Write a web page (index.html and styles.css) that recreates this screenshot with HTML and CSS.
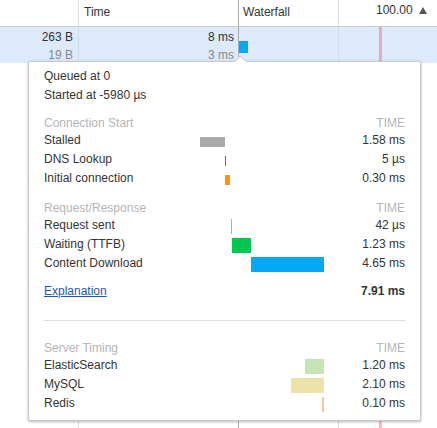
FILE: index.html
```html
<!DOCTYPE html>
<html>
<head>
<meta charset="utf-8">
<link rel="stylesheet" href="styles.css">
</head>
<body>
<div class="table">
  <div class="hcell col1"></div>
  <div class="hcell col2">Time</div>
  <div class="hcell col3">Waterfall</div>
  <div class="hcell col4">100.00 <svg class="sort" width="8" height="7" viewBox="0 0 8 7"><path d="M4 0 L8 7 L0 7 Z" fill="#555"/></svg></div>

  <div class="rcell col1 num"><div>263 B</div><div class="sub">19 B</div></div>
  <div class="rcell col2 num"><div>8 ms</div><div class="sub">3 ms</div></div>
  <div class="rcell col3 wf"><span class="wbar" style="left:0;width:9px"></span></div>
  <div class="rcell col4"></div>

  <div class="fcell col1"></div>
  <div class="fcell col2"></div>
  <div class="fcell col3"></div>
  <div class="fcell col4"></div>
</div>

<div class="event-line dcl" style="left:381px"></div>
<div class="event-line load" style="left:379px"></div>

<div class="popover">
  <span class="arrow"></span>
  <div class="lines">
    <div class="line">Queued at 0</div>
    <div class="line">Started at -5980 µs</div>
  </div>

  <div class="row head"><span>Connection Start</span><span></span><span class="t">TIME</span></div>
  <div class="row"><span>Stalled</span><span class="bars"><i class="bar short stalled" style="left:0;width:25px"></i></span><span class="t">1.58 ms</span></div>
  <div class="row"><span>DNS Lookup</span><span class="bars"><i class="bar short dns" style="left:25px;width:1px"></i></span><span class="t">5 µs</span></div>
  <div class="row"><span>Initial connection</span><span class="bars"><i class="bar short connecting" style="left:25px;width:5px"></i></span><span class="t">0.30 ms</span></div>

  <div class="row head"><span>Request/Response</span><span></span><span class="t">TIME</span></div>
  <div class="row"><span>Request sent</span><span class="bars"><i class="bar sending" style="left:31px;width:1px"></i></span><span class="t">42 µs</span></div>
  <div class="row"><span>Waiting (TTFB)</span><span class="bars"><i class="bar waiting" style="left:32px;width:19px"></i></span><span class="t">1.23 ms</span></div>
  <div class="row"><span>Content Download</span><span class="bars"><i class="bar receiving" style="left:51px;width:73px"></i></span><span class="t">4.65 ms</span></div>

  <div class="row total"><span><a href="#" class="link">Explanation</a></span><span></span><span class="t"><b>7.91 ms</b></span></div>

  <div class="separator"></div>

  <div class="row head"><span>Server Timing</span><span></span><span class="t">TIME</span></div>
  <div class="row"><span>ElasticSearch</span><span class="bars"><i class="bar srv elastic" style="left:105px;width:19px"></i></span><span class="t">1.20 ms</span></div>
  <div class="row"><span>MySQL</span><span class="bars"><i class="bar srv mysql" style="left:91px;width:33px"></i></span><span class="t">2.10 ms</span></div>
  <div class="row"><span>Redis</span><span class="bars"><i class="bar srv redis" style="left:122px;width:2px"></i></span><span class="t">0.10 ms</span></div>
</div>
</body>
</html>
```
FILE: styles.css
```css
html, body {
  margin: 0;
  padding: 0;
  height: 100%;
  background: #fff;
}
body {
  font-family: "Liberation Sans", Arial, sans-serif;
  font-size: 12px;
  color: #333;
  position: relative;
  overflow: hidden;
}
.table {
  display: grid;
  grid-template-columns: 79px 160px 100px 1fr;
  grid-template-rows: 27px 36px 1fr;
  height: 100vh;
}
.hcell {
  border-bottom: 1px solid #ccc;
  border-right: 1px solid #ddd;
  line-height: 20px;
  padding: 2px 5px 0;
  white-space: nowrap;
}
.hcell.col2 { border-right-color: #aaa; }
.hcell.col3 { padding-left: 4px; }
.hcell.col4 {
  border-right: none;
  text-align: right;
  padding-top: 0;
  padding-right: 10px;
}
.sort { margin-left: 3px; vertical-align: 0; }
.rcell {
  background: #dceafc;
  border-right: 1px solid #cfdcec;
  line-height: 18px;
  padding: 1px 5px 0;
}
.rcell.col2 { border-right-color: #aaa; padding-right: 4px; }
.rcell.col4 { border-right: none; }
.num { text-align: right; }
.sub { color: #888; }
.wf { position: relative; padding: 0; }
.wbar {
  position: absolute;
  top: 14px;
  height: 12px;
  background: #03a9f4;
}
.fcell { border-right: 1px solid #ddd; }
.fcell.col2 { border-right-color: #aaa; }
.fcell.col4 { border-right: none; }

.event-line {
  position: absolute;
  top: 27px;
  bottom: 0;
  width: 2px;
}
.event-line.load { background: rgba(255, 0, 0, 0.28); }
.event-line.dcl { background: rgba(0, 0, 255, 0.18); width: 1px; }

.popover {
  position: absolute;
  left: 28px;
  top: 61px;
  width: 361px;
  padding: 3px 15px 7px;
  background: #fff;
  border: 1px solid #c8c8c8;
  border-radius: 2px;
  box-shadow: 0 1px 3px rgba(0, 0, 0, 0.28);
}
.arrow {
  position: absolute;
  left: 207px;
  top: -5px;
  width: 8px;
  height: 8px;
  background: #fff;
  border-top: 1px solid #c8c8c8;
  border-left: 1px solid #c8c8c8;
  transform: rotate(45deg);
}
.lines {
  padding-top: 2px;
  height: 36px;
}
.line { line-height: 19px; }
.row {
  display: grid;
  grid-template-columns: 156px 125px 80px;
  line-height: 19px;
  height: 19px;
}
.row .t { text-align: right; white-space: nowrap; }
.row.head {
  color: #b5b5b5;
  padding-top: 11px;
  height: 17px;
}
.row.total { padding-top: 9px; }
.bars { position: relative; }
.bar {
  position: absolute;
  top: 3px;
  height: 15px;
}
.bar.short { top: 6px; height: 10px; }
.stalled { background: #aaa; }
.dns { background: #009688; }
.connecting { background: #ff9800; }
.sending { background: #b0b0b0; }
.waiting { background: #00c853; }
.receiving { background: #03a9f4; }
.elastic { background: #c4e5b3; }
.mysql { background: #ece2aa; }
.redis { background: #f3c89e; }
.link { color: #1f55c6; text-decoration: underline; }
b { font-weight: bold; }
.separator {
  height: 1px;
  background: #ddd;
  margin: 19px 0 7px;
}
```
